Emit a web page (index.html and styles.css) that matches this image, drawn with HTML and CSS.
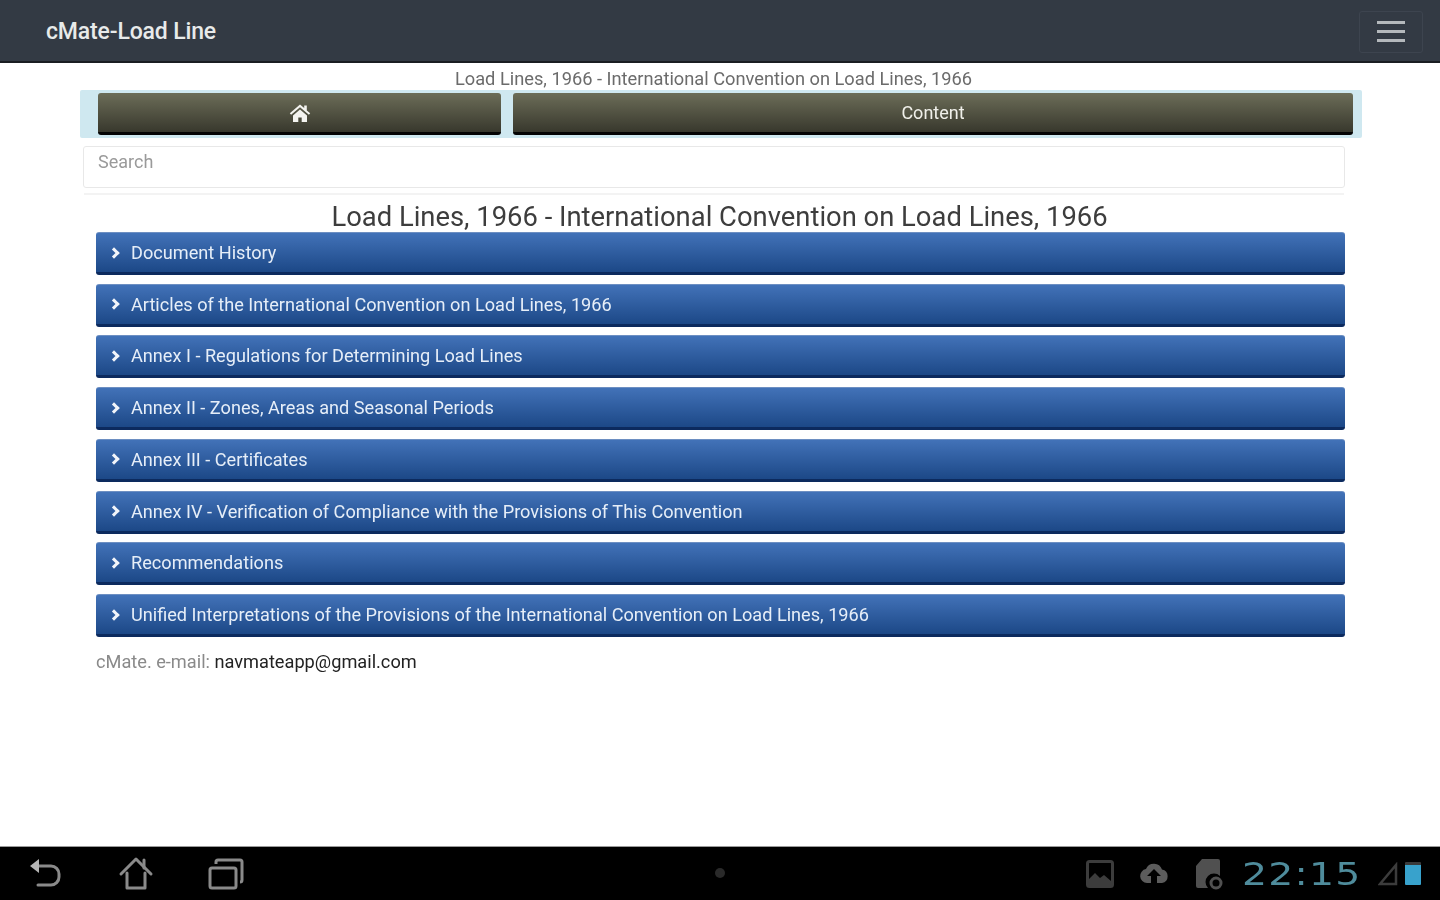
FILE: index.html
```html
<!DOCTYPE html>
<html lang="en">
<head>
<meta charset="utf-8">
<title>cMate-Load Line</title>
<link rel="stylesheet" href="styles.css">
</head>
<body>
<div class="screen">
  <header class="topbar">
    <div class="brand">cMate-Load Line</div>
    <button class="menu" aria-label="Menu"><span></span><span></span><span></span></button>
  </header>
  <main class="content">
    <div class="crumb">Load Lines, 1966 - International Convention on Load Lines, 1966</div>
    <nav class="toolbar">
      <a class="tool tool-home" aria-label="Home">
        <svg width="22" height="20" viewBox="0 0 22 20"><path fill="#f4f4f0" d="M11 1.5 0.8 10.3l1.3 1.4L11 4.2l8.9 7.5 1.3-1.4-3.4-2.9V2.5h-2.6v2.6L11 1.5zM4 12.6V19h5.3v-4.6h3.4V19H18v-6.4L11 6.6z"/></svg>
      </a>
      <a class="tool tool-content">Content</a>
    </nav>
    <div class="search">Search</div>
    <div class="rule"></div>
    <h1 class="title">Load Lines, 1966 - International Convention on Load Lines, 1966</h1>
    <ul class="list">
      <li class="row"><i class="chev"></i>Document History</li>
      <li class="row"><i class="chev"></i>Articles of the International Convention on Load Lines, 1966</li>
      <li class="row"><i class="chev"></i>Annex I - Regulations for Determining Load Lines</li>
      <li class="row"><i class="chev"></i>Annex II - Zones, Areas and Seasonal Periods</li>
      <li class="row"><i class="chev"></i>Annex III - Certificates</li>
      <li class="row"><i class="chev"></i>Annex IV - Verification of Compliance with the Provisions of This Convention</li>
      <li class="row"><i class="chev"></i>Recommendations</li>
      <li class="row"><i class="chev"></i>Unified Interpretations of the Provisions of the International Convention on Load Lines, 1966</li>
    </ul>
    <p class="contact">cMate. e-mail: <a class="mail">navmateapp@gmail.com</a></p>
  </main>
  <footer class="sysbar">
    <div class="navs">
      <svg width="36" height="36" viewBox="0 0 36 36" fill="none" stroke="#8a8a8a" stroke-width="3" stroke-linecap="round" stroke-linejoin="round"><path d="M6 10h17a8 8 0 0 1 8 8v3a8 8 0 0 1-8 8H10"/><path fill="#b5b5b5" stroke="none" d="M2 10 11 3v14z"/></svg>
      <svg width="36" height="36" viewBox="0 0 36 36" fill="none" stroke="#8a8a8a" stroke-width="3" stroke-linejoin="round" stroke-linecap="round"><path d="M3 18 18 3l15 15"/><path d="M26 4v8"/><path d="M9 17v15h18V17"/></svg>
      <svg width="36" height="36" viewBox="0 0 36 36" fill="none" stroke="#8a8a8a" stroke-width="3" stroke-linejoin="round"><rect x="2" y="12" width="26" height="20" rx="2"/><path d="M8 8V6a2 2 0 0 1 2-2h22a2 2 0 0 1 2 2v18a2 2 0 0 1-2 2"/></svg>
    </div>
    <div class="dot"></div>
    <div class="status">
      <svg width="28" height="28" viewBox="0 0 28 28"><rect x="1.5" y="1.5" width="25" height="25" rx="2" fill="none" stroke="#3c3c3c" stroke-width="3"/><path fill="#3c3c3c" d="M3 25v-6l6-6 5 5 4-3 7 6v4z"/></svg>
      <svg width="30" height="24" viewBox="0 0 30 24"><path fill="#5c5c5c" d="M8 21a7 7 0 0 1-1-13.9A8.5 8.5 0 0 1 23 7.6 6.8 6.8 0 0 1 23 21h-5v-7h4l-7-7-7 7h4v7z"/></svg>
      <svg width="30" height="32" viewBox="0 0 30 32"><path fill="#505050" d="M9 1h16a2 2 0 0 1 2 2v15a8 8 0 0 0-12 12H5a2 2 0 0 1-2-2V8z"/><circle cx="23" cy="25" r="5" fill="none" stroke="#505050" stroke-width="3"/></svg>
      <div class="clock">22:15</div>
      <div class="signal"><svg width="20" height="24" viewBox="0 0 20 24"><path fill="none" stroke="#3c3c3c" stroke-width="2.5" d="M2 22 18 3v19z"/></svg></div>
      <div class="battery"></div>
    </div>
  </footer>
</div>
</body>
</html>
```
FILE: styles.css
```css
* { box-sizing: border-box; }
html, body { margin: 0; padding: 0; }
body { font-family: Roboto, "Liberation Sans", sans-serif; background: #fff; color: #333; }
.screen { width: 1440px; height: 900px; display: flex; flex-direction: column; overflow: hidden; filter: blur(0.55px); }

.topbar {
  height: 63px; flex: none; display: flex; align-items: center; justify-content: space-between;
  padding: 2px 17px 0 46px; background: #333a44; border-bottom: 2px solid #1a1d22;
}
.brand { font-size: 23px; color: #e8eaea; font-weight: 500; letter-spacing: -0.15px; }
.menu {
  width: 64px; height: 42px; padding: 0; display: flex; flex-direction: column; align-items: center; justify-content: center; gap: 6px;
  background: transparent; border: 1px solid #3d444f; border-radius: 3px;
}
.menu span { display: block; width: 28px; height: 3px; background: #b4b8bc; }

.content { flex: 1; display: flex; flex-direction: column; position: relative; }
.crumb { height: 27px; padding: 5px 13px 0 0; text-align: center; font-size: 18.25px; line-height: 21px; color: #6b6b6b; white-space: nowrap; }
.toolbar {
  margin-left: 80px; width: 1282px; height: 48px; padding: 3px 9px 3px 18px; display: flex; gap: 12px;
  background: #cfe8f0; border-radius: 2px;
}
.tool {
  height: 42px; display: flex; align-items: center; justify-content: center; border-radius: 3px;
  background: linear-gradient(#6c6d58, #38382d); border-bottom: 3px solid #050505; color: #f0f0ea; font-size: 18px;
}
.tool-home { width: 403px; }
.tool-content { width: 840px; }
.search {
  margin: 8px 0 0 83px; width: 1262px; height: 42px; padding: 3px 14px; font-size: 18px; line-height: 24px; color: #9a9a9a;
  background: #fff; border: 1px solid #e8e8e8; border-radius: 3px;
}
.rule { margin: 5px 0 0 84px; width: 1260px; height: 2px; background: #f3f3f3; }
.title { margin: 7px 0 0 0; padding-right: 1px; height: 30px; text-align: center; font-weight: 400; font-size: 27.4px; line-height: 30px; color: #3d3d3d; white-space: nowrap; }
.list { list-style: none; margin: 0 0 0 96px; padding: 0; width: 1249px; display: flex; flex-direction: column; gap: 8.72px; }
.row {
  height: 43px; display: flex; align-items: center; padding: 0 0 0 14px; border-radius: 3px; color: #e6eef8; font-size: 18.15px; white-space: nowrap;
  background: linear-gradient(#4272b8, #1c4887); border-bottom: 3px solid #0c2a5e; border-top: 1px solid #6d8fc2;
}
.chev { width: 8px; height: 8px; margin-right: 13px; flex: none; border-top: 3px solid #f2f5fa; border-right: 3px solid #f2f5fa; transform: rotate(45deg); }
.contact { margin: 14px 0 0 96px; font-size: 18.2px; line-height: 22px; color: #8a8a8a; }
.mail { color: #222; }

.sysbar {
  height: 54px; flex: none; position: relative; display: flex; align-items: center; justify-content: space-between;
  background: #000; border-top: 1px solid #9a9a9a; padding: 0 19px 0 28px;
}
.navs { display: flex; gap: 54px; }
.dot { position: absolute; left: 715px; top: 21px; width: 10px; height: 10px; border-radius: 50%; background: #2a2a2a; }
.status { display: flex; align-items: center; }
.status svg { display: block; }
.status > svg:nth-child(1) { margin-right: 25px; }
.status > svg:nth-child(2) { margin-right: 24px; }
.status > svg:nth-child(3) { margin-right: 19px; }
.clock { width: 117px; font-family: "DejaVu Sans", sans-serif; font-size: 32px; line-height: 36px; color: #4f8c9c; letter-spacing: 1px; margin-right: 19px; transform: scaleX(1.23); transform-origin: left center; white-space: nowrap; }
.battery { width: 16px; height: 23px; margin-left: 7px; background: linear-gradient(#3a3a3a 0 14%, #38a2cc 14%); border-radius: 1px; }
```
